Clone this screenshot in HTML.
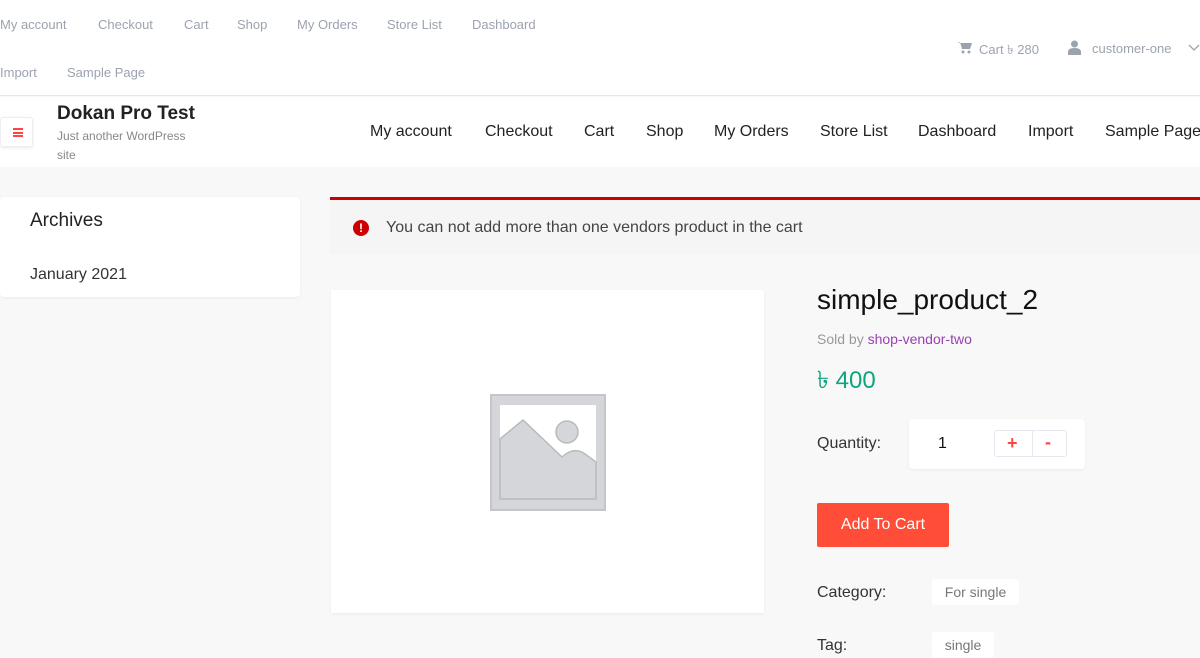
<!DOCTYPE html>
<html><head><meta charset="utf-8"><style>
*{margin:0;padding:0;box-sizing:border-box}
body{width:1200px;height:658px;overflow:hidden;background:#f8f8f8;font-family:"Liberation Sans",Arial,sans-serif;position:relative}
.a{position:absolute;white-space:nowrap}
.top{position:absolute;left:0;top:0;width:1200px;height:96px;background:#fff;border-bottom:1px solid #e5e7eb}
.tl{font-size:13px;color:#9ca3af}
.hdr{position:absolute;left:0;top:97px;width:1200px;height:70px;background:#fff}
.nav{font-size:16px;color:#222}
.bar{position:absolute;left:12px;width:10px;height:2px;background:#f44}
</style></head><body>
<div class="top">
<span class="a tl" style="left:0;top:17px">My account</span>
<span class="a tl" style="left:98px;top:17px">Checkout</span>
<span class="a tl" style="left:184px;top:17px">Cart</span>
<span class="a tl" style="left:237px;top:17px">Shop</span>
<span class="a tl" style="left:297px;top:17px">My Orders</span>
<span class="a tl" style="left:387px;top:17px">Store List</span>
<span class="a tl" style="left:472px;top:17px">Dashboard</span>
<span class="a tl" style="left:0;top:65px">Import</span>
<span class="a tl" style="left:67px;top:65px">Sample Page</span>
<svg class="a" style="left:957px;top:41px" width="15" height="13" viewBox="0 0 15 13"><path d="M0 1h3l2 7h8l2-6H4" fill="#9ca3af"/><circle cx="6" cy="11" r="1.5" fill="#9ca3af"/><circle cx="12" cy="11" r="1.5" fill="#9ca3af"/></svg>
<span class="a tl" style="left:979px;top:41px">Cart ৳ 280</span>
<svg class="a" style="left:1068px;top:40px" width="13" height="15" viewBox="0 0 13 15"><circle cx="6.5" cy="4" r="3.5" fill="#9ca3af"/><path d="M0 15v-3q0-4 6.5-4t6.5 4v3z" fill="#9ca3af"/></svg>
<span class="a tl" style="left:1092px;top:41px">customer-one</span>
<svg class="a" style="left:1188px;top:44px" width="12" height="8"><path d="M1 1l5 5 5-5" stroke="#9ca3af" fill="none" stroke-width="1.3"/></svg>
</div>
<div class="hdr">
<div class="a" style="left:0;top:20px;width:33px;height:30px;border:1px solid #eee;border-radius:3px;box-shadow:0 1px 3px rgba(0,0,0,.08);background:#fff"><div class="bar" style="top:10px"></div><div class="bar" style="top:13.5px"></div><div class="bar" style="top:17px"></div></div>
<span class="a" style="left:57px;top:6px;font-size:19px;font-weight:bold;color:#222">Dokan Pro Test</span>
<span class="a" style="left:57px;top:32px;font-size:12px;color:#888">Just another WordPress</span>
<span class="a" style="left:57px;top:51px;font-size:12px;color:#888">site</span>
<span class="a nav" style="left:370px;top:26px">My account</span>
<span class="a nav" style="left:485px;top:26px">Checkout</span>
<span class="a nav" style="left:584px;top:26px">Cart</span>
<span class="a nav" style="left:646px;top:26px">Shop</span>
<span class="a nav" style="left:714px;top:26px">My Orders</span>
<span class="a nav" style="left:820px;top:26px">Store List</span>
<span class="a nav" style="left:918px;top:26px">Dashboard</span>
<span class="a nav" style="left:1028px;top:26px">Import</span>
<span class="a nav" style="left:1105px;top:26px">Sample Page</span>
</div>
<div class="a" style="left:0;top:197px;width:300px;height:100px;background:#fff;border-radius:4px;box-shadow:0 1px 3px rgba(0,0,0,.05)">
<span class="a" style="left:30px;top:13px;font-size:19px;color:#222">Archives</span>
<span class="a" style="left:30px;top:69px;font-size:16px;color:#333">January 2021</span>
</div>
<div class="a" style="left:330px;top:197px;width:870px;height:57px;background:#f6f5f6;border-top:3px solid #c00"></div>
<div class="a" style="left:353px;top:220px;width:16px;height:16px;border-radius:50%;background:#c00;color:#fff;font-size:12px;font-weight:bold;text-align:center;line-height:16px">!</div>
<span class="a" style="left:386px;top:219px;font-size:16px;color:#444">You can not add more than one vendors product in the cart</span>
<div class="a" style="left:331px;top:290px;width:433px;height:323px;background:#fff;box-shadow:0 1px 3px rgba(0,0,0,.06)"></div>
<svg class="a" style="left:489px;top:394px" width="118" height="118" viewBox="0 0 118 118"><rect x="2" y="1" width="114" height="115" fill="#d4d6d9" stroke="#c3c5c8" stroke-width="2"/><rect x="11" y="11" width="96" height="94" fill="#fff"/><path d="M11 45L34 26 73 63Q85 52 96 60L107 68V105H11Z" fill="#d4d6d9" stroke="#b8babd" stroke-width="1.5"/><circle cx="78" cy="38" r="11" fill="#d4d6d9" stroke="#b8babd" stroke-width="1.5"/></svg>
<span class="a" style="left:817px;top:284px;font-size:28px;color:#111">simple_product_2</span>
<span class="a" style="left:817px;top:331px;font-size:14px;color:#999">Sold by <span style="color:#9b3fb3">shop-vendor-two</span></span>
<span class="a" style="left:817px;top:362px;font-size:24px;color:#10a37f">৳ 400</span>
<span class="a" style="left:817px;top:435px;font-size:16px;color:#333">Quantity:</span>
<div class="a" style="left:909px;top:419px;width:176px;height:50px;background:#fff;border-radius:4px;box-shadow:0 1px 3px rgba(0,0,0,.06)"></div>
<span class="a" style="left:938px;top:435px;font-size:16px;color:#111">1</span>
<div class="a" style="left:994px;top:430px;width:73px;height:27px;border:1px solid #e5e9ef;border-radius:3px;background:#fff"><div style="position:absolute;left:37px;top:0;width:1px;height:25px;background:#e5e9ef"></div><span class="a" style="left:12px;top:2px;font-size:18px;color:#f44;font-weight:bold">+</span><span class="a" style="left:50px;top:1px;font-size:18px;color:#f44;font-weight:bold">-</span></div>
<div class="a" style="left:817px;top:503px;width:132px;height:44px;background:#ff4d37;border-radius:2px;color:#fff;font-size:16px;text-align:center;line-height:44px">Add To Cart</div>
<span class="a" style="left:817px;top:584px;font-size:16px;color:#333">Category:</span>
<div class="a" style="left:932px;top:579px;width:87px;height:26px;background:#fff;border-radius:3px;color:#777;font-size:14px;text-align:center;line-height:26px">For single</div>
<span class="a" style="left:817px;top:637px;font-size:16px;color:#333">Tag:</span>
<div class="a" style="left:932px;top:632px;width:62px;height:26px;background:#fff;border-radius:3px;color:#777;font-size:14px;text-align:center;line-height:26px">single</div>
</body></html>
